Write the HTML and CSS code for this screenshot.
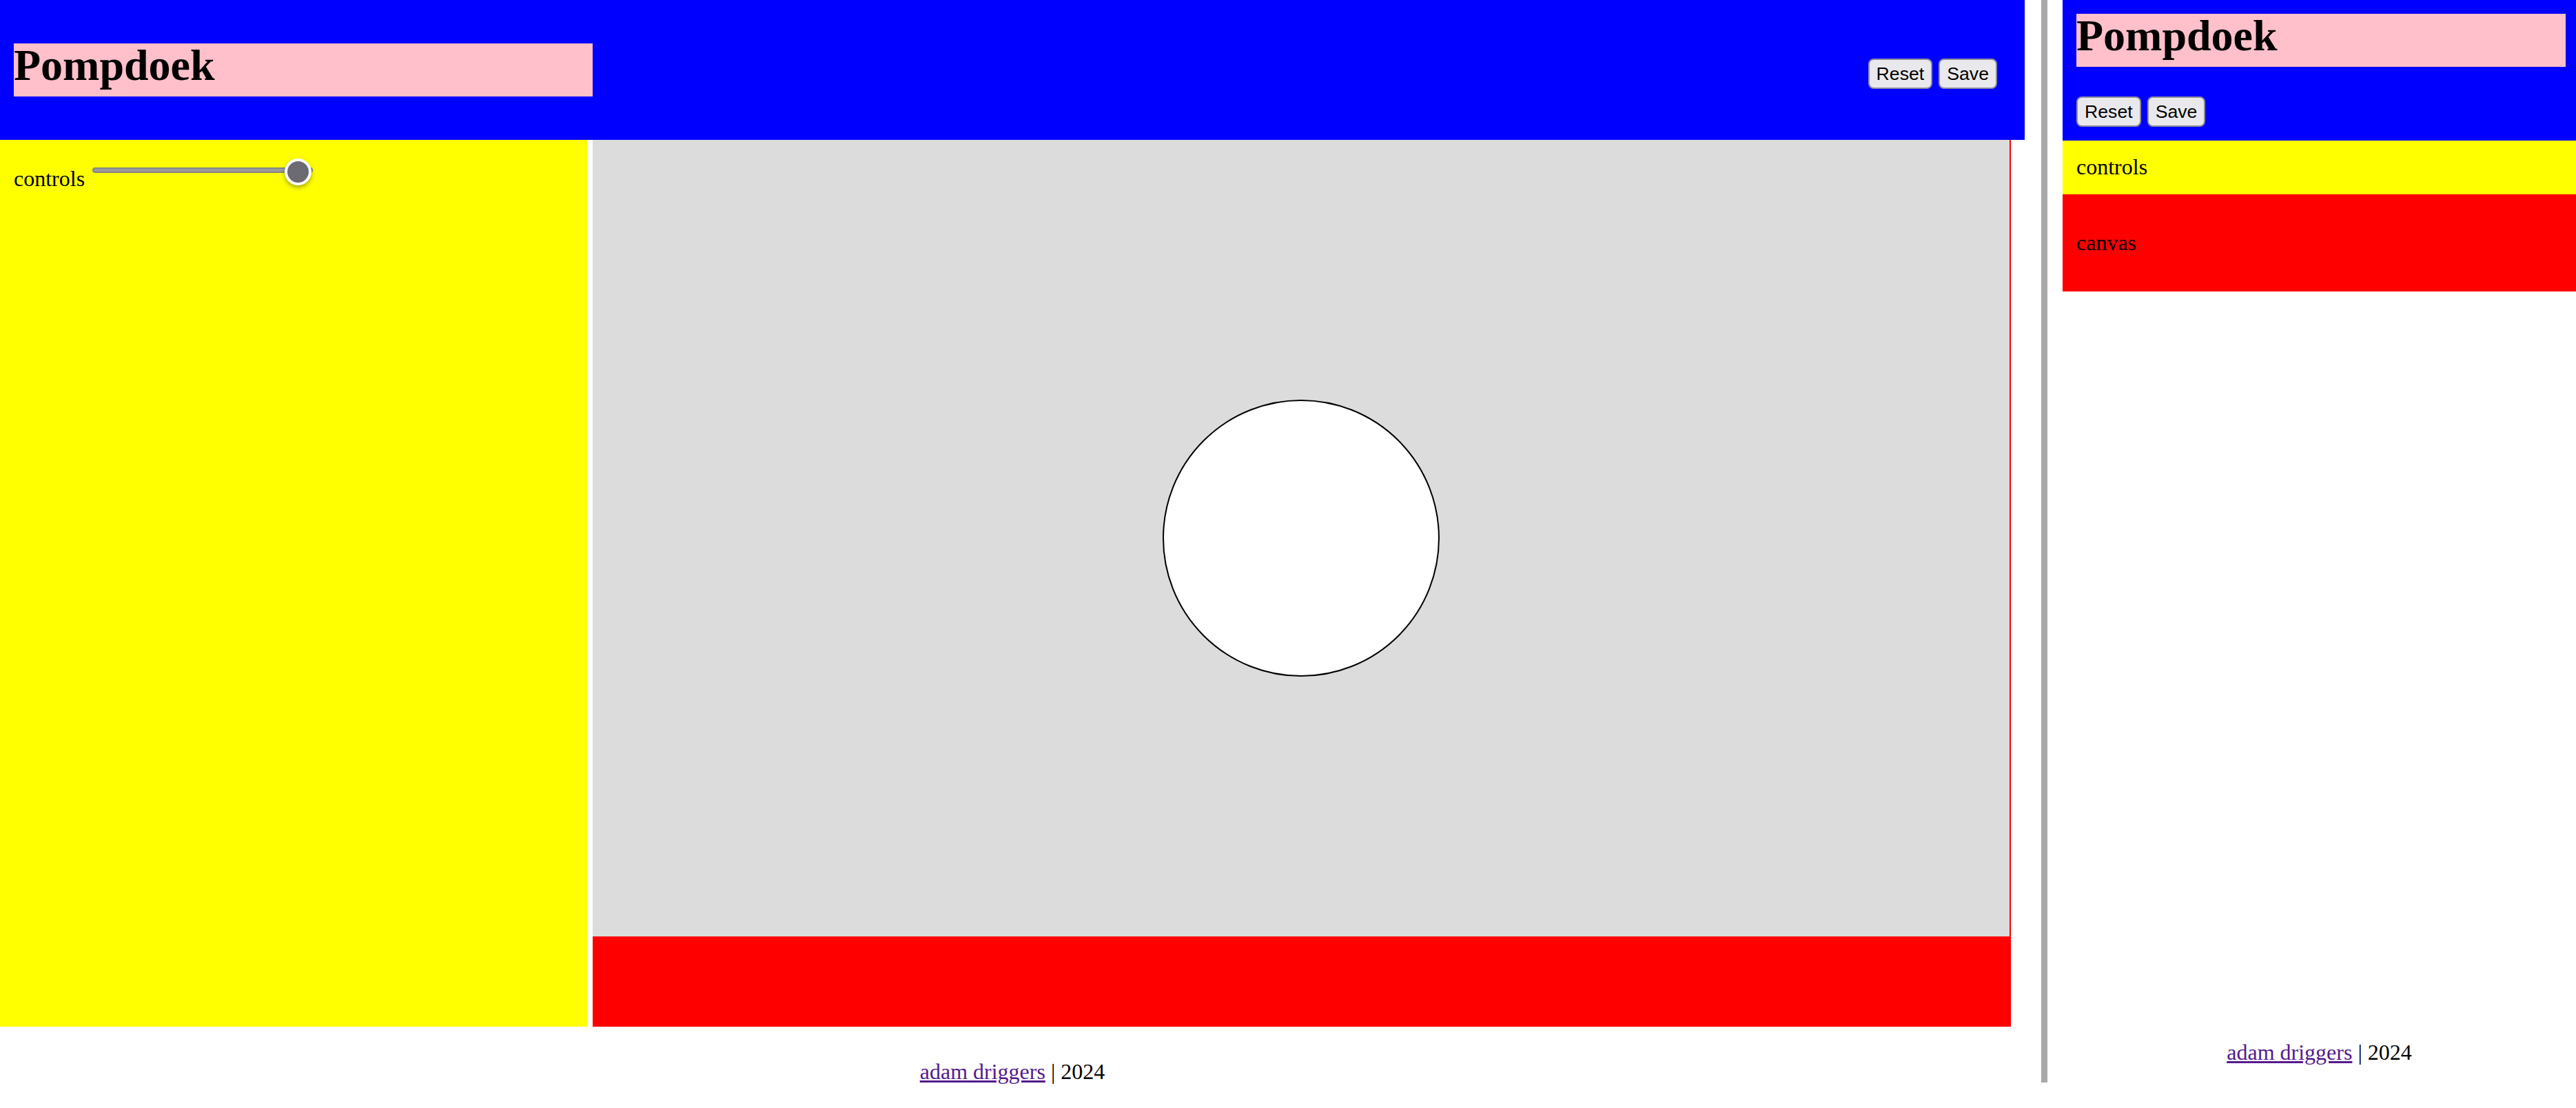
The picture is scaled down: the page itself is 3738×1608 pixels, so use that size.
FILE: index.html
```html
<!DOCTYPE html>
<html lang="en">
<head>
<meta charset="utf-8">
<title>Pompdoek</title>
<link rel="stylesheet" href="styles.css">
</head>
<body>
<div class="stage">
  <div class="view view-wide">
    <header class="bar">
      <h1 class="title">Pompdoek</h1>
      <div class="actions actions-wide">
        <button class="btn" type="button">Reset</button>
        <button class="btn" type="button">Save</button>
      </div>
    </header>
    <main class="workspace">
      <aside class="controls">
        <div class="control-row">
          <span class="control-label">controls</span>
          <input class="slider" type="range" min="0" max="100" value="100">
        </div>
      </aside>
      <section class="canvas-wrap">
        <svg class="canvas" width="2056" height="1156" viewBox="0 0 2056 1156">
          <circle cx="1028" cy="578" r="200" fill="#ffffff" stroke="#000000" stroke-width="2"/>
        </svg>
      </section>
    </main>
    <footer class="credit credit-wide"><a class="credit-link" href="#">adam driggers</a> | 2024</footer>
  </div>

  <div class="divider"></div>

  <div class="view view-narrow">
    <header class="bar bar-stack">
      <h1 class="title title-narrow">Pompdoek</h1>
      <div class="actions">
        <button class="btn" type="button">Reset</button>
        <button class="btn" type="button">Save</button>
      </div>
    </header>
    <div class="controls-narrow">controls</div>
    <div class="canvas-narrow"><p class="canvas-label">canvas</p></div>
    <footer class="credit credit-narrow"><a class="credit-link" href="#">adam driggers</a> | 2024</footer>
  </div>
</div>
</body>
</html>
```
FILE: styles.css
```css
html, body {
  margin: 0;
  padding: 0;
  background: #ffffff;
}

body {
  font-family: "Liberation Serif", "Times New Roman", serif;
  font-size: 32px;
  color: #000000;
}

.stage {
  display: flex;
  align-items: flex-start;
  height: 1608px;
  overflow: hidden;
}

/* ---------- wide view ---------- */
.view-wide {
  width: 2938px;
  flex: none;
  display: flex;
  flex-direction: column;
}

.bar {
  background: #0000ff;
  display: flex;
  justify-content: space-between;
  align-items: center;
  padding: 20px 40px 20px 20px;
}

.title {
  margin: 43px 0;
  width: 840px;
  background: #ffc0cb;
  font-size: 64px;
  font-weight: bold;
  line-height: 63px;
  padding-bottom: 14px;
}

.actions {
  display: flex;
  gap: 9px;
}

.actions-wide {
  margin-top: 11px;
}

.btn {
  height: 44px;
  padding: 0 10px;
  font-family: "Liberation Sans", Arial, sans-serif;
  font-size: 26.67px;
  color: #000000;
  background: #e9e9ed;
  border: 2px solid #8f8f9d;
  border-radius: 8px;
  box-sizing: border-box;
}

.workspace {
  display: flex;
  height: 1287px;
}

.controls {
  width: 852px;
  flex: none;
  box-sizing: border-box;
  padding: 20px;
  background: #ffff00;
  margin-right: 8px;
}

.control-row {
  display: flex;
  align-items: flex-start;
}

.control-label {
  padding-top: 18px;
  line-height: 37px;
}

.slider {
  -webkit-appearance: none;
  appearance: none;
  width: 320px;
  height: 40px;
  margin: 4px 0 0 11px;
  padding: 0;
  background: transparent;
}

.slider::-webkit-slider-runnable-track {
  height: 8px;
  background: #9b9b9b;
  border: 2px solid #878787;
  border-radius: 6px;
}

.slider::-webkit-slider-thumb {
  -webkit-appearance: none;
  appearance: none;
  width: 39px;
  height: 39px;
  margin-top: -15.5px;
  border-radius: 50%;
  background: #6c6b73;
  border: 4px solid #ffffff;
  box-sizing: border-box;
  box-shadow: 0 3px 6px rgba(0, 0, 0, 0.35);
}

.canvas-wrap {
  width: 2058px;
  flex: none;
  background: #ff0000;
}

.canvas {
  display: block;
  background: #dcdcdc;
}

.credit {
  text-align: center;
  line-height: 37px;
}

.credit-wide {
  padding-top: 47px;
}

.credit-link {
  color: #551a8b;
  text-decoration: underline;
}

/* ---------- divider ---------- */
.divider {
  flex: none;
  width: 9px;
  height: 1571px;
  margin-left: 24px;
  background: #a9a9a9;
}

/* ---------- narrow view ---------- */
.view-narrow {
  flex: none;
  width: 745px;
  margin-left: 22px;
  height: 1571px;
  display: flex;
  flex-direction: column;
}

.bar-stack {
  display: block;
  padding: 20px 15px 20px 20px;
}

.title-narrow {
  margin: 0 0 43px 0;
  width: 710px;
}

.controls-narrow {
  background: #ffff00;
  padding: 20px 20px 21px 20px;
  line-height: 37px;
}

.canvas-narrow {
  background: #ff0000;
  padding: 20px;
}

.canvas-label {
  margin: 32px 0;
  line-height: 37px;
}

.credit-narrow {
  margin-top: auto;
  padding-bottom: 25px;
}
```
